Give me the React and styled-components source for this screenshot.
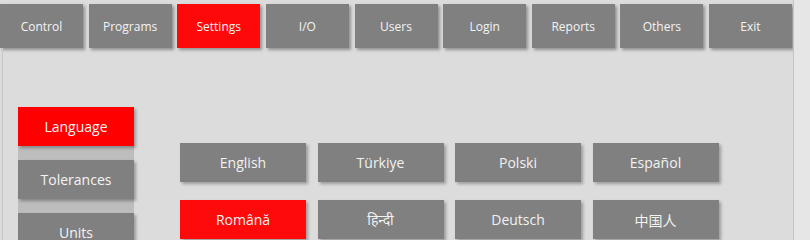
import React from "react";
import styled, { createGlobalStyle } from "styled-components";

const Global = createGlobalStyle`
  html, body { margin: 0; padding: 0; background: #e6e6e6; }
  body { font-family: "Open Sans", "Noto Sans", "Noto Sans CJK SC", sans-serif; }
  #root { width: 810px; height: 100vh; min-height: 215px; overflow: hidden; }
`;

const Frame = styled.div`
  width: 793px;
  height: 100%;
  background: #dcdcdc;
  border-right: 1px solid #c4c4c4;
  display: flex;
  flex-direction: column;
  overflow: hidden;
`;

const Nav = styled.nav`
  display: flex;
  justify-content: space-between;
  width: 792px;
  padding-top: 4px;
  height: 44px;
  flex-shrink: 0;
`;

const NavButton = styled.div`
  width: 83px;
  height: 44px;
  background: ${(p) => (p.$active ? "#fe0909" : "#808080")};
  color: #f4f4f4;
  font-size: 12px;
  display: flex;
  align-items: center;
  justify-content: center;
  box-shadow: 2px 2px 3px rgba(0, 0, 0, 0.35);
`;

const Panel = styled.div`
  flex: 1;
  margin-left: 2px;
  border-left: 1px solid #c6c6c6;
  display: flex;
  align-items: flex-start;
`;

const SideMenu = styled.div`
  margin-left: 15px;
  margin-top: 59px;
  width: 116px;
  display: flex;
  flex-direction: column;
  gap: 14px;
  background: #bdbdbd;
`;

const SideButton = styled.div`
  height: 39px;
  background: ${(p) => (p.$active ? "#ff0000" : "#808080")};
  color: #f4f4f4;
  font-size: 14px;
  display: flex;
  align-items: center;
  justify-content: center;
  box-shadow: 2px 2px 3px rgba(0, 0, 0, 0.3);
`;

const LangGrid = styled.div`
  margin-left: 46px;
  margin-top: 95px;
  display: grid;
  grid-template-columns: repeat(4, 126px);
  column-gap: 11.5px;
  row-gap: 18px;
`;

const LangButton = styled.div`
  height: 39px;
  background: ${(p) => (p.$active ? "#ff0a0a" : "#808080")};
  color: #f2f2f2;
  font-size: 14px;
  display: flex;
  align-items: center;
  justify-content: center;
  box-shadow: 2px 2px 3px rgba(0, 0, 0, 0.3);
`;

const navItems = ["Control", "Programs", "Settings", "I/O", "Users", "Login", "Reports", "Others", "Exit"];
const sideItems = ["Language", "Tolerances", "Units"];
const langs = ["English", "Türkiye", "Polski", "Español", "Română", "हिन्दी", "Deutsch", "中国人"];

export default function App() {
  return (
    <>
      <Global />
      <Frame>
        <Nav>
          {navItems.map((n) => (
            <NavButton key={n} $active={n === "Settings"}>{n}</NavButton>
          ))}
        </Nav>
        <Panel>
          <SideMenu>
            {sideItems.map((s) => (
              <SideButton key={s} $active={s === "Language"}>{s}</SideButton>
            ))}
          </SideMenu>
          <LangGrid>
            {langs.map((l) => (
              <LangButton key={l} $active={l === "Română"}>{l}</LangButton>
            ))}
          </LangGrid>
        </Panel>
      </Frame>
    </>
  );
}
